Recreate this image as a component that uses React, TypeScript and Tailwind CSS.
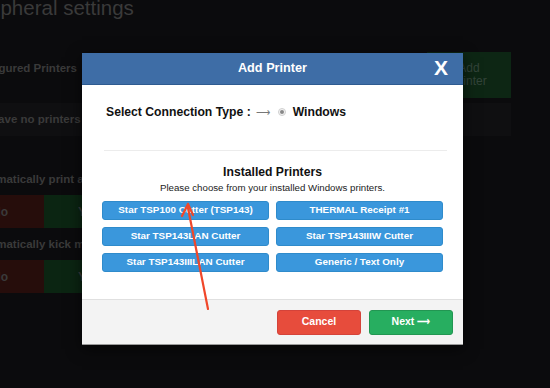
import React from "react";

const printers = [
  "Star TSP100 Cutter (TSP143)",
  "THERMAL Receipt #1",
  "Star TSP143LAN Cutter",
  "Star TSP143IIIW Cutter",
  "Star TSP143IIILAN Cutter",
  "Generic / Text Only",
];

function BackgroundPage() {
  return (
    <div className="flex flex-col text-[#3a3a3a]">
      <div className="ml-[-36px] mt-[-7px] h-[30px] text-[20.5px] leading-[30px] whitespace-nowrap">Peripheral settings</div>
      <div className="mt-[29px] flex h-[46px] w-[511px] items-start justify-between">
        <div className="ml-[-31px] mt-[7px] text-[11.5px] font-bold leading-[18px] whitespace-nowrap">Configured Printers</div>
        <div className="flex h-[46px] w-[84px] flex-col items-center justify-center bg-[#0d2614] text-[12px] leading-[13px] text-[#33443a]">
          <span>Add</span>
          <span>Printer</span>
        </div>
      </div>
      <div className="mt-[5px] flex h-[33px] w-[511px] items-center bg-[#0f0f11]">
        <div className="ml-[-33px] text-[11.5px] font-bold whitespace-nowrap">You have no printers</div>
      </div>
      <div className="mt-[34px] ml-[-30px] text-[11.5px] font-bold leading-[18px] whitespace-nowrap">Automatically print a receipt</div>
      <div className="mt-[7px] flex h-[33px]">
        <div className="flex w-[44px] items-center bg-[#260d0b] text-[12px] font-bold">
          <span className="ml-[-8px]">No</span>
        </div>
        <div className="flex w-[120px] items-center bg-[#0b2512] text-[12px] font-bold">
          <span className="ml-[34px]">Yes</span>
        </div>
      </div>
      <div className="mt-[7px] ml-[-30px] text-[11.5px] font-bold leading-[18px] whitespace-nowrap">Automatically kick me out</div>
      <div className="mt-[7px] flex h-[33px]">
        <div className="flex w-[44px] items-center bg-[#260d0b] text-[12px] font-bold">
          <span className="ml-[-8px]">No</span>
        </div>
        <div className="flex w-[120px] items-center bg-[#0b2512] text-[12px] font-bold">
          <span className="ml-[34px]">Yes</span>
        </div>
      </div>
    </div>
  );
}

function AddPrinterModal() {
  return (
    <div className="absolute left-[82px] top-[53px] flex w-[381px] flex-col border-b border-[#9a9a9a] bg-white shadow-[0_4px_14px_rgba(0,0,0,0.6)]">
      <div className="relative flex h-[32px] items-center justify-center border-b border-[#2e5b90] bg-[#3e6da6] text-white">
        <span className="text-[12.7px] font-bold">Add Printer</span>
        <span className="absolute right-[15px] top-[3px] text-[21px] font-bold leading-[24px]">X</span>
      </div>

      <div className="flex flex-col">
        <div className="mt-[17px] ml-[24px] flex h-[20px] items-center text-[12.2px] font-bold text-[#111]">
          <span>Select Connection Type :</span>
          <span className="ml-[5px] text-[10px] font-normal text-[#777]">&#10230;</span>
          <span className="ml-[8px] flex h-[8px] w-[8px] items-center justify-center rounded-full border border-[#cfcfcf] bg-[#f4f4f4]">
            <span className="h-[4px] w-[4px] rounded-full bg-[#888]" />
          </span>
          <span className="ml-[7px]">Windows</span>
        </div>

        <div className="mr-[16px] ml-[22px] mt-[28px] h-px bg-[#ececec]" />

        <div className="mt-[12px] text-center text-[12.2px] font-bold leading-[18px] text-[#111]">Installed Printers</div>
        <div className="text-center text-[9.7px] leading-[14px] text-[#222]">Please choose from your installed Windows printers.</div>

        <div className="mx-[20px] mt-[6px] mb-[27px] grid grid-cols-2 gap-x-[7px] gap-y-[7px]">
          {printers.map((p) => (
            <div
              key={p}
              className="flex h-[19px] items-center justify-center rounded-[3px] border border-[#2f8bcb] bg-[#3a97dc] text-[9.9px] font-bold text-white"
            >
              {p}
            </div>
          ))}
        </div>
      </div>

      <div className="flex h-[45px] items-center justify-end gap-[8px] border-t border-[#e0e0e0] bg-[#f3f3f3] pr-[10px]">
        <div className="flex h-[25px] w-[84px] items-center justify-center rounded-[3px] border border-[#d4433a] bg-[#e74c3c] text-[10.5px] font-bold text-white">
          Cancel
        </div>
        <div className="flex h-[25px] w-[84px] items-center justify-center rounded-[3px] border border-[#229652] bg-[#27ae60] text-[10.5px] font-bold text-white">
          Next <span className="ml-[3px] text-[9px]">&#10230;</span>
        </div>
      </div>
    </div>
  );
}

export default function App() {
  return (
    <div className="relative h-[388px] w-[550px] overflow-hidden bg-[#0b0b0d] font-['Liberation_Sans',Arial,sans-serif]">
      <BackgroundPage />
      <AddPrinterModal />
      <svg className="pointer-events-none absolute left-0 top-0" width="550" height="388">
        <line x1="208" y1="309" x2="188" y2="208" stroke="#f0472a" strokeWidth="2.2" strokeLinecap="round" />
        <path d="M188 204 L182 216 M188 204 L193 215" stroke="#f0472a" strokeWidth="2.2" strokeLinecap="round" fill="none" />
      </svg>
    </div>
  );
}
